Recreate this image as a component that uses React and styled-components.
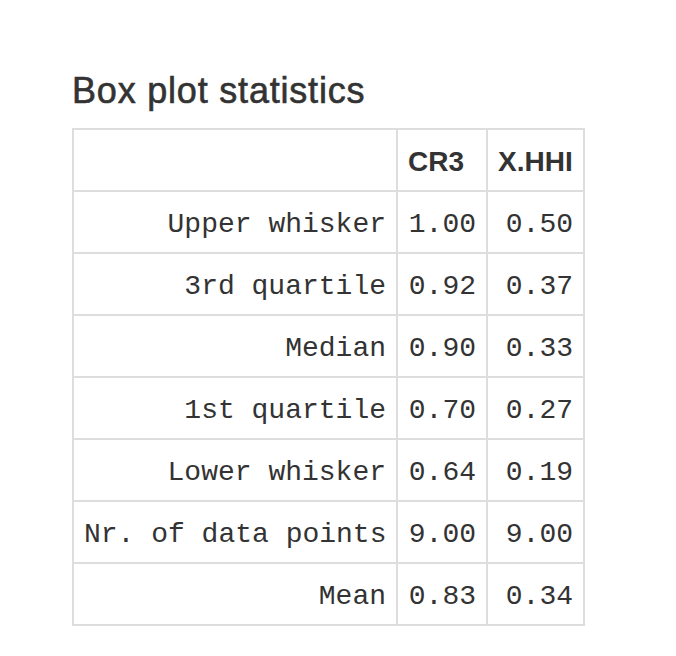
import React from 'react';
import styled, { createGlobalStyle } from 'styled-components';

const GlobalStyle = createGlobalStyle`
  body {
    margin: 0;
    background: #fff;
    color: #333;
    font-family: "Liberation Sans", Arial, sans-serif;
  }
`;

const rows = [
  { label: 'Upper whisker', cr3: '1.00', hhi: '0.50' },
  { label: '3rd quartile', cr3: '0.92', hhi: '0.37' },
  { label: 'Median', cr3: '0.90', hhi: '0.33' },
  { label: '1st quartile', cr3: '0.70', hhi: '0.27' },
  { label: 'Lower whisker', cr3: '0.64', hhi: '0.19' },
  { label: 'Nr. of data points', cr3: '9.00', hhi: '9.00' },
  { label: 'Mean', cr3: '0.83', hhi: '0.34' },
];

const App = () => {
  return (
    <Page>
      <GlobalStyle />
      <Title>Box plot statistics</Title>
      <StatsTable>
        <colgroup>
          <col style={{ width: 324 }} />
          <col style={{ width: 90 }} />
          <col style={{ width: 97 }} />
        </colgroup>
        <thead>
          <tr>
            <HeadCell />
            <HeadCell>CR3</HeadCell>
            <HeadCell>X.HHI</HeadCell>
          </tr>
        </thead>
        <tbody>
          {rows.map((row) => (
            <tr key={row.label}>
              <Cell>{row.label}</Cell>
              <Cell>{row.cr3}</Cell>
              <Cell>{row.hhi}</Cell>
            </tr>
          ))}
        </tbody>
      </StatsTable>
    </Page>
  );
};

export default App;

const Page = styled.div`
  padding: 72px 0 0 72px;
`;

const Title = styled.h3`
  margin: 0 0 18px;
  font-size: 36px;
  line-height: 38px;
  font-weight: 500;
  letter-spacing: 0.8px;
  color: #333;
  -webkit-text-stroke: 0.6px #333;
`;

const StatsTable = styled.table`
  border-collapse: separate;
  border-spacing: 0;
  table-layout: fixed;
  width: 513px;
  border-right: 2px solid #ddd;
  border-bottom: 2px solid #ddd;
`;

const HeadCell = styled.th`
  box-sizing: border-box;
  height: 62px;
  padding: 3px 10px 0;
  border-left: 2px solid #ddd;
  border-top: 2px solid #ddd;
  text-align: left;
  vertical-align: middle;
  font-family: "Liberation Sans", Arial, sans-serif;
  font-size: 28px;
  font-weight: bold;
  color: #333;
`;

const Cell = styled.td`
  box-sizing: border-box;
  height: 62px;
  padding: 5px 10px 0;
  border-left: 2px solid #ddd;
  border-top: 2px solid #ddd;
  text-align: right;
  vertical-align: middle;
  font-family: "Liberation Mono", "Courier New", monospace;
  font-size: 28px;
  color: #333;
  white-space: nowrap;
`;
